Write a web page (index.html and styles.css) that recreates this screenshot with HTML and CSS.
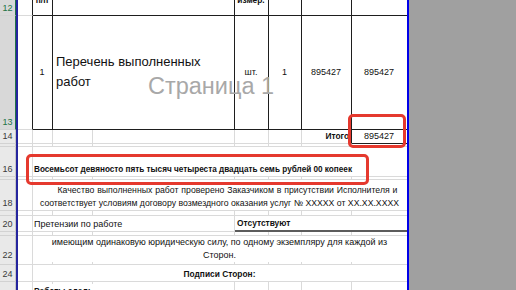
FILE: index.html
```html
<!DOCTYPE html>
<html lang="ru">
<head>
  <meta charset="UTF-8" />
  <meta name="viewport" content="width=device-width, initial-scale=1.0" />
  <title>Акт выполненных работ</title>
  <link rel="stylesheet" href="styles.css">
</head>
<body>
  <div class="sheet">
    <!-- Row 12: table header (scrolled, only the bottom is visible) -->
    <div class="row h12">
      <div class="rh sel">12</div><div class="pb"></div>
      <div class="c tr"></div>
      <div class="c tr tb mid bold">п/п</div>
      <div class="c tr tb span2"></div>
      <div class="c tr tb mid bold">измер.</div>
      <div class="c tr tb"></div>
      <div class="c tr tb"></div>
      <div class="c tb last"></div>
      <div class="pb end"></div>
    </div>
    <!-- Row 13: the only line of the table -->
    <div class="row h13">
      <div class="rh sel">13</div><div class="pb"></div>
      <div class="c tr"></div>
      <div class="c tr tb mid vc">1</div>
      <div class="c tr tb span2 vc name">Перечень выполненных работ</div>
      <div class="c tr tb mid vc">шт.</div>
      <div class="c tr tb mid vc">1</div>
      <div class="c tr tb mid vc">895427</div>
      <div class="c tb mid vc last">895427</div>
      <div class="pb end"></div>
    </div>
    <!-- Row 14: total -->
    <div class="row h14">
      <div class="rh">14</div><div class="pb"></div>
      <div class="c"></div><div class="c"></div><div class="c"></div><div class="c"></div>
      <div class="c"></div><div class="c"></div>
      <div class="c tr right bold">Итого</div>
      <div class="c tb mid last">895427</div>
      <div class="pb end"></div>
    </div>
    <div class="row h15">
      <div class="rh">15</div><div class="pb"></div>
      <div class="c"></div><div class="c"></div><div class="c"></div><div class="c"></div>
      <div class="c"></div><div class="c"></div><div class="c"></div><div class="c last"></div>
      <div class="pb end"></div>
    </div>
    <!-- Row 16: sum in words -->
    <div class="row h16">
      <div class="rh">16</div><div class="pb"></div>
      <div class="c"></div>
      <div class="c span7 bold words last">Восемьсот девяносто пять тысяч четыреста двадцать семь рублей 00 копеек</div>
      <div class="pb end"></div>
    </div>
    <div class="row h17">
      <div class="rh">17</div><div class="pb"></div>
      <div class="c"></div><div class="c"></div><div class="c"></div><div class="c"></div>
      <div class="c"></div><div class="c"></div><div class="c"></div><div class="c last"></div>
      <div class="pb end"></div>
    </div>
    <!-- Row 18: quality statement -->
    <div class="row h18">
      <div class="rh">18</div><div class="pb"></div>
      <div class="c"></div>
      <div class="c span7 para small last">
        <span class="line indent">Качество выполненных работ проверено Заказчиком в присутствии Исполнителя и</span>
        <span class="line">соответствует условиям договору возмездного оказания услуг № XXXXX от XX.XX.XXXX</span>
      </div>
      <div class="pb end"></div>
    </div>
    <div class="row h19">
      <div class="rh">19</div><div class="pb"></div>
      <div class="c"></div><div class="c"></div><div class="c"></div><div class="c"></div>
      <div class="c"></div><div class="c"></div><div class="c"></div><div class="c last"></div>
      <div class="pb end"></div>
    </div>
    <!-- Row 20: claims -->
    <div class="row h20">
      <div class="rh">20</div><div class="pb"></div>
      <div class="c"></div>
      <div class="c span3">Претензии по работе</div>
      <div class="c span4 bold under last">Отсутствуют</div>
      <div class="pb end"></div>
    </div>
    <div class="row h21">
      <div class="rh">21</div><div class="pb"></div>
      <div class="c"></div><div class="c"></div><div class="c"></div><div class="c"></div>
      <div class="c"></div><div class="c"></div><div class="c"></div><div class="c last"></div>
      <div class="pb end"></div>
    </div>
    <!-- Row 22: copies -->
    <div class="row h22">
      <div class="rh">22</div><div class="pb"></div>
      <div class="c"></div>
      <div class="c span7 para last">
        <span class="line">имеющим одинаковую юридическую силу, по одному экземпляру для каждой из</span>
        <span class="line">Сторон.</span>
      </div>
      <div class="pb end"></div>
    </div>
    <div class="row h23">
      <div class="rh">23</div><div class="pb"></div>
      <div class="c"></div><div class="c"></div><div class="c"></div><div class="c"></div>
      <div class="c"></div><div class="c"></div><div class="c"></div><div class="c last"></div>
      <div class="pb end"></div>
    </div>
    <!-- Row 24: signatures -->
    <div class="row h24">
      <div class="rh">24</div><div class="pb"></div>
      <div class="c"></div>
      <div class="c span7 mid bold last">Подписи Сторон:</div>
      <div class="pb end"></div>
    </div>
    <div class="row h25">
      <div class="rh">25</div><div class="pb"></div>
      <div class="c"></div><div class="c"></div><div class="c"></div><div class="c"></div>
      <div class="c"></div><div class="c"></div><div class="c"></div><div class="c last"></div>
      <div class="pb end"></div>
    </div>
    <div class="row h26">
      <div class="rh">26</div><div class="pb"></div>
      <div class="c"></div>
      <div class="c span3 bold">Работы сдал:</div>
      <div class="c"></div><div class="c"></div><div class="c"></div><div class="c last"></div>
      <div class="pb end"></div>
    </div>

    <!-- Page break preview label and annotations -->
    <div class="watermark">Страница 1</div>
    <div class="mark mark-total"></div>
    <div class="mark mark-words"></div>
  </div>
</body>
</html>
```

FILE: styles.css
```css
/* Base */
* { margin: 0; padding: 0; box-sizing: border-box; }
body {
  font-family: 'Liberation Sans', Arial, sans-serif;
  background: #a0a0a0;
  color: #111;
  height: 290px;
  overflow: hidden;
}
.sheet {
  position: relative;
  width: 409px;
}
/* Rows: row header, page break line, columns A..H, page break line */
.row {
  display: grid;
  grid-template-columns: 16px 2px 15px 20px 40px 142px 34px 33px 50px 55px 2px;
}
.h12 { height: 16px; }
.h13 { height: 114px; }
.h14 { height: 14px; }
.h15 { height: 3px; }
.h16 { height: 30px; }
.h17 { height: 3px; }
.h18 { height: 31px; }
.h19 { height: 5px; }
.h20 { height: 16px; }
.h21 { height: 4px; }
.h22 { height: 26px; }
.h23 { height: 3px; }
.h24 { height: 17px; }
.h25 { height: 2px; }
.h26 { height: 17px; }

/* Row headers */
.rh {
  background: #e9e9e9;
  color: #3a3a3a;
  font-size: 9px;
  line-height: 10px;
  border-right: 1px solid #c6c6c6;
  border-bottom: 1px solid #d2d2d2;
  display: flex;
  align-items: flex-end;
  justify-content: center;
  padding-bottom: 2px;
  overflow: hidden;
}
.rh.sel {
  background: #d8d8d8;
  color: #217346;
  border-right-color: #217346;
}
/* Page break lines */
.pb { background: #25259e; }
.pb.end { background: #0000e8; }

/* Cells */
.c {
  background: #fff;
  border-right: 1px solid #dadada;
  border-bottom: 1px solid #dadada;
  font-size: 9px;
  line-height: 10px;
  white-space: nowrap;
  display: flex;
  align-items: flex-end;
  padding: 0 2px 2px 1px;
  min-width: 0;
}
.c.last { border-right: none; }
.c.tr { border-right-color: #1e1e1e; }
.c.tb { border-bottom-color: #1e1e1e; }
.c.mid { justify-content: center; }
.c.right { justify-content: flex-end; }
.c.vc { align-items: center; }
.c.bold { font-weight: bold; font-size: 8.4px; }
.h12 .c { padding-bottom: 10px; overflow: hidden; }
.h26 .c { align-items: flex-start; padding-top: 2px; }
.span2 { grid-column: span 2; }
.span3 { grid-column: span 3; }
.span4 { grid-column: span 4; }
.span7 { grid-column: span 7; }

.c.name {
  font-size: 13px;
  line-height: 20px;
  white-space: normal;
  padding-left: 3px;
}
.c.words { padding-bottom: 1px; font-size: 8.2px; }
.c.para {
  flex-direction: column;
  align-items: center;
  justify-content: flex-end;
  line-height: 13px;
  padding-bottom: 0;
}
.c.para.small { font-size: 8.7px; }
.para .line { display: block; }
.para .indent { padding-left: 16px; word-spacing: 0.5px; }
.c.under {
  padding-left: 2px;
  border-bottom: 2px solid #5c5c5c;
}

/* Overlays */
.watermark {
  position: absolute;
  left: 148px;
  top: 75px;
  font-size: 23.5px;
  line-height: 23px;
  color: #a8a8a8;
  white-space: nowrap;
}
.mark {
  position: absolute;
  border: 3px solid #e5392e;
  border-radius: 5px;
}
.mark-total { left: 348px; top: 114px; width: 58px; height: 34px; }
.mark-words { left: 26px; top: 154px; width: 343px; height: 31px; }
```
